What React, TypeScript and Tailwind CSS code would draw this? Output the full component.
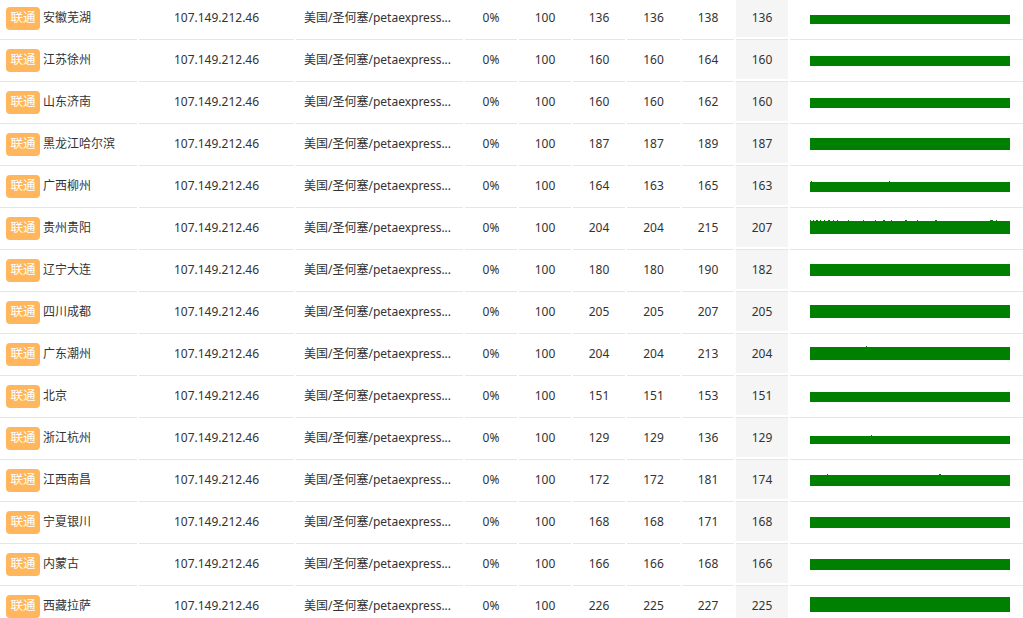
import React from "react";

type Row = {
  city: string;
  nums: [string, string, string, string, string];
  h: number;
  ticks?: [number, number, number][]; // x, width, height
};

const rows: Row[] = [
  { city: "安徽芜湖", nums: ["100", "136", "136", "138", "136"], h: 9 },
  { city: "江苏徐州", nums: ["100", "160", "160", "164", "160"], h: 10 },
  { city: "山东济南", nums: ["100", "160", "160", "162", "160"], h: 10 },
  { city: "黑龙江哈尔滨", nums: ["100", "187", "187", "189", "187"], h: 12 },
  { city: "广西柳州", nums: ["100", "164", "163", "165", "163"], h: 10, ticks: [[1, 1, 1], [79, 1, 1]] },
  {
    city: "贵州贵阳",
    nums: ["100", "204", "204", "215", "207"],
    h: 13,
    ticks: [
      [0, 1, 1], [3, 1, 1], [6, 2, 1], [10, 1, 1], [14, 1, 1], [18, 2, 1], [23, 1, 1], [27, 1, 1],
      [38, 1, 1], [53, 1, 1], [65, 1, 1], [73, 2, 1], [81, 1, 1], [95, 2, 1], [107, 1, 1], [125, 2, 1],
      [180, 3, 1], [186, 1, 1],
    ],
  },
  { city: "辽宁大连", nums: ["100", "180", "180", "190", "182"], h: 12 },
  { city: "四川成都", nums: ["100", "205", "205", "207", "205"], h: 13 },
  { city: "广东潮州", nums: ["100", "204", "204", "213", "204"], h: 13, ticks: [[56, 1, 1]] },
  { city: "北京", nums: ["100", "151", "151", "153", "151"], h: 10 },
  { city: "浙江杭州", nums: ["100", "129", "129", "136", "129"], h: 8, ticks: [[61, 1, 1]] },
  { city: "江西南昌", nums: ["100", "172", "172", "181", "174"], h: 11, ticks: [[17, 1, 1], [129, 2, 1]] },
  { city: "宁夏银川", nums: ["100", "168", "168", "171", "168"], h: 11 },
  { city: "内蒙古", nums: ["100", "166", "166", "168", "166"], h: 11 },
  { city: "西藏拉萨", nums: ["100", "226", "225", "227", "225"], h: 15 },
];

const widths = [137, 155, 167, 52, 52, 52, 53, 52, 52, 233];

function Bar({ h, ticks }: { h: number; ticks?: [number, number, number][] }) {
  return (
    <svg width="200" height="20" viewBox="0 0 200 20" className="block">
      <rect x="0" y={20 - h} width="200" height={h} fill="#008000" />
      {ticks?.map(([x, w, th], i) => (
        <rect key={i} x={x} y={20 - h - th} width={w} height={th} fill="#008000" />
      ))}
    </svg>
  );
}

export default function App() {
  return (
    <div
      className="w-[1023px] h-[618px] overflow-hidden bg-white text-[12px] text-[#333]"
      style={{ fontFamily: '"Noto Sans", "Noto Sans CJK SC", sans-serif' }}
    >
      <table className="w-[1027px] table-fixed border-separate border-spacing-[2px] -mt-[5px] -ml-[2px]">
        <colgroup>
          {widths.map((w, i) => (
            <col key={i} style={{ width: w }} />
          ))}
        </colgroup>
        <tbody>
          {rows.map((r, i) => (
            <tr key={i}>
              <td className="p-0 border-t border-[#e6e6e6]">
                <div className="h-[39px] flex items-center pl-[6px] gap-[3px] pt-[1px]">
                  <span className="h-[23px] w-[34px] rounded-[4px] bg-[#ffb65c] text-white flex items-center justify-center text-[12.5px]">
                    联通
                  </span>
                  <span className="whitespace-nowrap">{r.city}</span>
                </div>
              </td>
              <td className="p-0 border-t border-[#e6e6e6]">
                <div className="h-[39px] flex items-center justify-center pt-[1px]">107.149.212.46</div>
              </td>
              <td className="p-0 border-t border-[#e6e6e6]">
                <div className="h-[39px] flex items-center pl-[8px] pt-[1px] whitespace-nowrap overflow-hidden">
                  美国/圣何塞/petaexpress...
                </div>
              </td>
              <td className="p-0 border-t border-[#e6e6e6]">
                <div className="h-[39px] flex items-center justify-center pt-[1px]">0%</div>
              </td>
              {r.nums.map((n, j) => (
                <td
                  key={j}
                  className={
                    j === 4
                      ? "p-0 border-t border-[#e6e6e6] bg-[#f5f5f5]"
                      : "p-0 border-t border-[#e6e6e6]"
                  }
                >
                  <div className="h-[39px] flex items-center justify-center pt-[1px]">{n}</div>
                </td>
              ))}
              <td className="p-0 border-t border-[#e6e6e6]">
                <div className="h-[39px] pl-[20px] pt-[6px]">
                  <Bar h={r.h} ticks={r.ticks} />
                </div>
              </td>
            </tr>
          ))}
        </tbody>
      </table>
    </div>
  );
}
